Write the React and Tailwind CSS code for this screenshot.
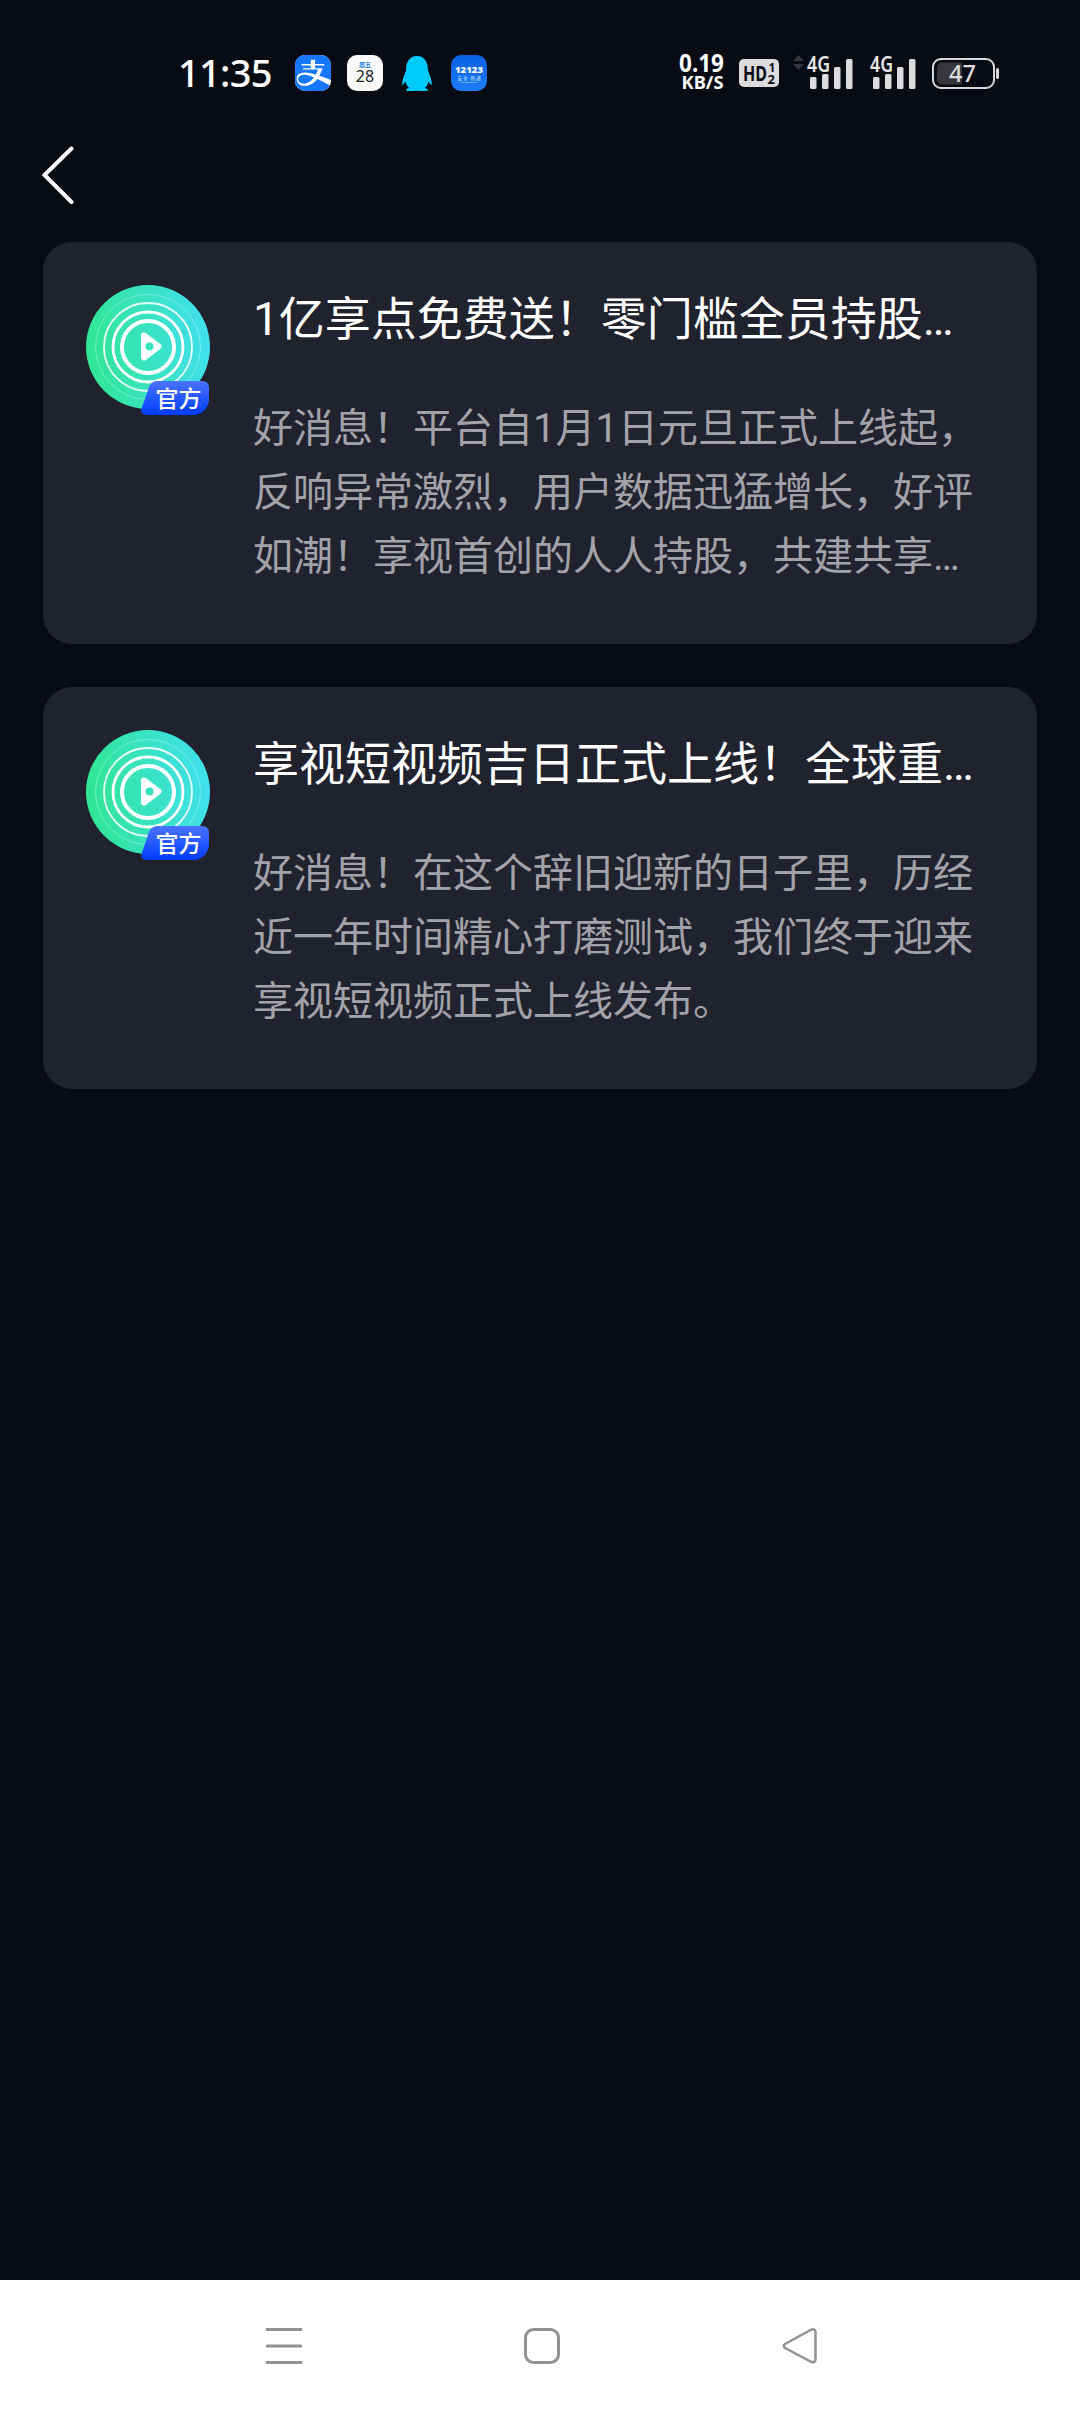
import { FaAlipay, FaQq } from 'react-icons/fa6'

const messages = [
  {
    title: '1亿享点免费送！零门槛全员持股…',
    body: '好消息！平台自1月1日元旦正式上线起，反响异常激烈，用户数据迅猛增长，好评如潮！享视首创的人人持股，共建共享…',
  },
  {
    title: '享视短视频吉日正式上线！全球重…',
    body: '好消息！在这个辞旧迎新的日子里，历经近一年时间精心打磨测试，我们终于迎来享视短视频正式上线发布。',
  },
]

function Signal() {
  return (
    <svg width="46" height="34" viewBox="0 0 46 34" className="block overflow-visible">
      <g fill="#dcdcde">
        <rect x="3" y="21" width="6.5" height="12" rx="1.5" />
        <rect x="15" y="18" width="6.5" height="15" rx="1.5" />
        <rect x="27" y="11" width="6.5" height="22" rx="1.5" />
        <rect x="39" y="3" width="6.5" height="30" rx="1.5" />
      </g>
      <text x="0" y="16" fontSize="21" fontWeight="600" fill="#e6e6e8" textLength="23" lengthAdjust="spacingAndGlyphs">4G</text>
    </svg>
  )
}

function StatusBar() {
  return (
    <div className="flex h-[146px] items-center pl-[178px] font-['Noto_Sans','Noto_Sans_CJK_SC',sans-serif]">
      <span className="w-[117px] pb-[3px] text-[38px] leading-[40px] font-medium tracking-[-0.7px] text-white">11:35</span>
      <div className="flex w-[384px] items-center gap-4">
        <div className="flex size-9 items-center justify-center overflow-hidden rounded-[10px] bg-white">
          <FaAlipay className="h-[43px] w-[38px] shrink-0 text-[#1677ff]" />
        </div>
        <div className="flex size-9 flex-col items-center justify-center rounded-[10px] bg-[#fafafa]">
          <span className="text-[6px] leading-[6px] font-bold text-[#1a86e8]">周五</span>
          <span className="text-[16px] leading-[17px] text-[#222]">28</span>
        </div>
        <div className="flex size-9 items-center justify-center">
          <FaQq className="h-[35px] w-[32px] text-[#00cafc]" />
        </div>
        <svg width="36" height="36" viewBox="0 0 36 36">
          <defs>
            <linearGradient id="traffic" x1="0" y1="0" x2="0" y2="1">
              <stop offset="0" stopColor="#0a60e0" />
              <stop offset="1" stopColor="#1c7cf8" />
            </linearGradient>
          </defs>
          <rect width="36" height="36" rx="10" fill="url(#traffic)" />
          <text x="4" y="18" fontSize="8.5" fontWeight="900" fill="#fff" textLength="28" lengthAdjust="spacingAndGlyphs">12123</text>
          <text x="6.5" y="25" fontSize="4.5" fill="#cfe3ff" textLength="23">安全·畅通</text>
          <path d="M10 27.5h16" stroke="#8fc0ff" strokeWidth="0.7" />
        </svg>
      </div>
      <svg width="46" height="38" viewBox="0 0 46 38" className="mr-[14px] overflow-visible" fill="#fff" fontWeight="700">
        <text x="0" y="18" fontSize="25" textLength="45" lengthAdjust="spacingAndGlyphs">0.19</text>
        <text x="2.5" y="35" fontSize="18.5" textLength="42" lengthAdjust="spacingAndGlyphs">KB/S</text>
      </svg>
      <svg width="40" height="28" viewBox="0 0 40 28" className="mr-[14px] overflow-visible">
        <rect width="40" height="28" rx="5" fill="#dcdcde" />
        <g fill="#0b0d15" fontWeight="700">
          <text x="4" y="22" fontSize="22" textLength="24" lengthAdjust="spacingAndGlyphs">HD</text>
          <text x="29.5" y="13" fontSize="12">1</text>
          <text x="28.5" y="24.5" fontSize="13">2</text>
        </g>
      </svg>
      <svg width="11" height="16" viewBox="0 0 11 16" fill="#34363e" className="mr-[3px] mb-5">
        <path d="M5.500 0L11 6H0zM5.500 15L11 9H0z" />
      </svg>
      <Signal />
      <div className="w-[17px]" />
      <Signal />
      <svg width="68" height="31" viewBox="0 0 68 31" className="ml-4">
        <rect x="1" y="1" width="61" height="29" rx="8" fill="none" stroke="#d8d8da" strokeWidth="2" />
        <path d="M30 4.500H10a5 5 0 0 0-5 5v12a5 5 0 0 0 5 5H30z" fill="#36373d" />
        <rect x="64" y="10" width="3" height="11" rx="1.500" fill="#d8d8da" />
        <text x="17" y="24" fontSize="23.500" fontWeight="500" fill="#dcdcde" textLength="27" lengthAdjust="spacingAndGlyphs">47</text>
      </svg>
    </div>
  )
}

function Avatar() {
  return (
    <div className="relative size-[124px] shrink-0">
      <svg width="124" height="124" viewBox="0 0 124 124" fill="none" stroke="#fff">
        <defs>
          <linearGradient id="disc" x1="0" y1="0.55" x2="1" y2="0.45">
            <stop offset="0" stopColor="#30e693" />
            <stop offset="1" stopColor="#40e0ee" />
          </linearGradient>
        </defs>
        <circle cx="62" cy="62" r="62" fill="url(#disc)" stroke="none" />
        <circle cx="62" cy="62" r="52.500" strokeWidth="1" opacity="0.3" />
        <circle cx="62" cy="62" r="44" strokeWidth="1.800" opacity="0.85" />
        <circle cx="62" cy="62" r="35" strokeWidth="2.800" />
        <circle cx="62" cy="62" r="26" strokeWidth="4" />
        <path d="M58 50.500L72.500 61.500L58 72.500z" fill="#fff" strokeWidth="6" strokeLinejoin="round" />
        <circle cx="63.500" cy="61.500" r="4" fill="#39e3bd" stroke="none" />
      </svg>
      <svg width="69" height="34" viewBox="0 0 69 34" className="absolute top-[96px] left-[55px]">
        <defs>
          <linearGradient id="official" x1="0" y1="0" x2="0" y2="1">
            <stop offset="0" stopColor="#4a74ff" />
            <stop offset="1" stopColor="#003cff" />
          </linearGradient>
        </defs>
        <path d="M15 0H61Q68 0 68 7V20Q66 31 55 34H5Q-1 33 0.500 28L8 6Q10 1 15 0Z" fill="url(#official)" />
        <text x="14.500" y="26" fontSize="23" fontWeight="500" fill="#fff">官方</text>
      </svg>
    </div>
  )
}

function MessageCard({ title, body }) {
  return (
    <div className="flex h-[402px] gap-[43px] rounded-[29px] bg-[#20222e] p-[43px]">
      <Avatar />
      <div className="min-w-0 flex-1">
        <h2 className="mt-[2px] mb-[46px] text-[46px] leading-[64px] whitespace-nowrap text-white">{title}</h2>
        <p className="text-[40px] leading-[64px] text-[#a2a2a8]">{body}</p>
      </div>
    </div>
  )
}

function NavBar() {
  return (
    <div className="flex h-[132px] items-center justify-between bg-white pr-[262px] pl-[266px]">
      <svg width="36" height="36" viewBox="0 0 36 36" stroke="#929292" strokeWidth="3">
        <path d="M0 1.500h36M0 18h36M0 34.500h36" />
      </svg>
      <svg width="36" height="36" viewBox="0 0 36 36" fill="none" stroke="#929292" strokeWidth="3">
        <rect x="1.500" y="1.500" width="33" height="33" rx="8" />
      </svg>
      <svg width="36" height="36" viewBox="0 0 36 36" fill="none" stroke="#929292" strokeWidth="2.500" strokeLinejoin="round">
        <path d="M3 16L28.500 2Q33 0 33.500 4V31.500Q33 35.500 28.500 33.500L3 20Q0.500 18 3 16Z" />
      </svg>
    </div>
  )
}

export default function App() {
  return (
    <div className="flex h-[2412px] w-[1080px] flex-col bg-[#080b13] font-[Roboto,'Noto_Sans_CJK_SC',sans-serif]">
      <StatusBar />
      <header className="flex h-[96px] pl-[41px]">
        <svg width="36" height="60" viewBox="0 0 36 60" fill="none" stroke="#fff" strokeWidth="4" strokeLinecap="round" strokeLinejoin="miter">
          <path d="M30.500 2.500L3.500 29L30.500 56" />
        </svg>
      </header>
      <main className="flex flex-1 flex-col gap-[43px] px-[43px]">
        {messages.map((m) => (
          <MessageCard key={m.title} title={m.title} body={m.body} />
        ))}
      </main>
      <NavBar />
    </div>
  )
}
